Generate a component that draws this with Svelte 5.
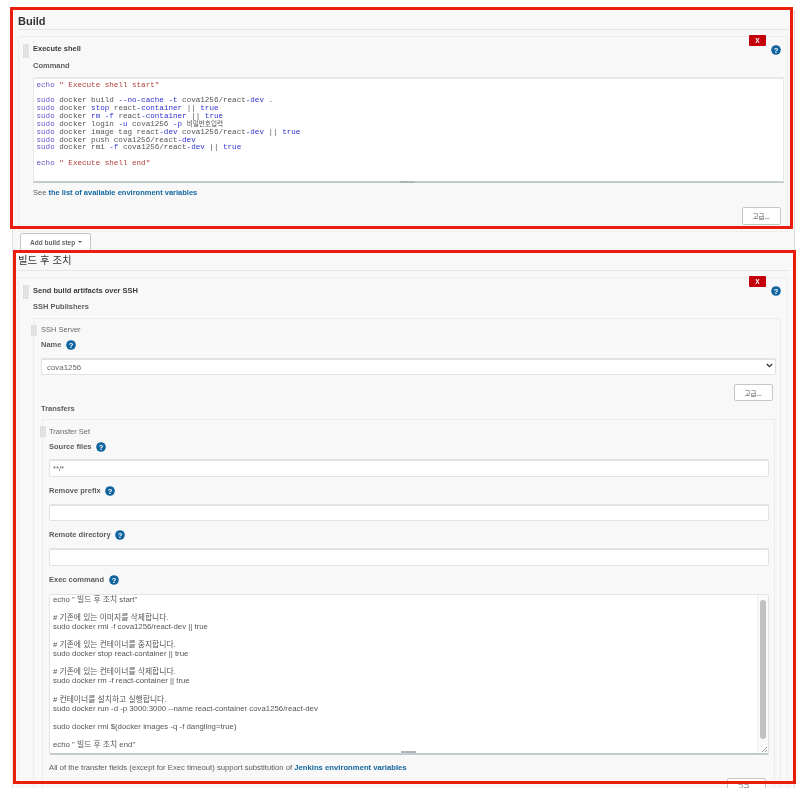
<script>
  const execLines = [
    'echo " 빌드 후 조치 start"',
    '',
    '# 기존에 있는 이미지를 삭제합니다.',
    'sudo docker rmi -f cova1256/react-dev || true',
    '',
    '# 기존에 있는 컨테이너를 중지합니다.',
    'sudo docker stop react-container || true',
    '',
    '# 기존에 있는 컨테이너를 삭제합니다.',
    'sudo docker rm -f react-container || true',
    '',
    '# 컨테이너를 설치하고 실행합니다.',
    'sudo docker run -d -p 3000:3000 --name react-container cova1256/react-dev',
    '',
    'sudo docker rmi $(docker images -q -f dangling=true)',
    '',
    'echo " 빌드 후 조치 end"'
  ];
</script>

{#snippet help()}
  <svg class="help" width="10" height="10" viewBox="0 0 10 10" aria-hidden="true">
    <circle cx="5" cy="5" r="4.8" fill="#0f639f" />
    <text x="5" y="7.7" text-anchor="middle" font-size="7.6" font-weight="700" fill="#fff">?</text>
  </svg>
{/snippet}

<div class="frame frame-build"></div>
<div class="frame frame-post"></div>

<main>
  <h2 class="first">Build</h2>
  <section class="card build-card">
    <span class="grip"></span>
    <button class="delete">X</button>
    <span class="corner-help">{@render help()}</span>
    <div class="title">Execute shell</div>
    <div class="label command">Command</div>
    <pre class="code"><span class="kw">echo</span> <span class="str">" Execute shell start"</span>

<span class="kw">sudo</span> docker build <span class="op">--no-cache</span> <span class="op">-t</span> cova1256/react<span class="op">-dev</span> .
<span class="kw">sudo</span> docker <span class="op">stop</span> react<span class="op">-container</span> || <span class="op">true</span>
<span class="kw">sudo</span> docker <span class="op">rm</span> <span class="op">-f</span> react<span class="op">-container</span> || <span class="op">true</span>
<span class="kw">sudo</span> docker login <span class="op">-u</span> cova1256 <span class="op">-p</span> <span class="ko">비밀번호입력</span>
<span class="kw">sudo</span> docker image tag react<span class="op">-dev</span> cova1256/react<span class="op">-dev</span> || <span class="op">true</span>
<span class="kw">sudo</span> docker push cova1256/react<span class="op">-dev</span>
<span class="kw">sudo</span> docker rmi <span class="op">-f</span> cova1256/react<span class="op">-dev</span> || <span class="op">true</span>

<span class="kw">echo</span> <span class="str">" Execute shell end"</span><span class="bar-grip"></span></pre>
    <p class="note see">See <a href="#vars">the list of available environment variables</a></p>
    <div class="actions first-actions"><button class="adv">고급...</button></div>
  </section>

  <button class="add-step">Add build step <i class="caret"></i></button>

  <h2 class="post">빌드 후 조치</h2>
  <section class="card post-card">
    <span class="grip"></span>
    <button class="delete">X</button>
    <span class="corner-help">{@render help()}</span>
    <div class="title">Send build artifacts over SSH</div>
    <div class="label publishers">SSH Publishers</div>

    <div class="box server-box">
      <span class="grip small"></span>
      <div class="plain">SSH Server</div>
      <div class="label with-help name">Name {@render help()}</div>
      <div class="select-wrap">
        <select class="field select-field">
          <option>cova1256</option>
        </select>
        <svg class="chevron" width="7" height="5" viewBox="0 0 7 5" aria-hidden="true">
          <path d="M0.8 1 L3.5 3.6 L6.2 1" fill="none" stroke="#333" stroke-width="1.3" />
        </svg>
      </div>
      <div class="actions server-actions"><button class="adv short">고급...</button></div>
      <div class="label transfers">Transfers</div>

      <div class="box transfer-box">
        <span class="grip small"></span>
        <div class="plain">Transfer Set</div>
        <div class="label with-help source">Source files {@render help()}</div>
        <input class="field" value="**/*" readonly />
        <div class="label with-help next">Remove prefix {@render help()}</div>
        <input class="field" readonly />
        <div class="label with-help next">Remote directory {@render help()}</div>
        <input class="field" readonly />
        <div class="label with-help next">Exec command {@render help()}</div>
        <div class="exec">
          <div class="exec-text">
            {#each execLines as line}
              <div class="exec-line">{line}</div>
            {/each}
          </div>
          <div class="scroll"><span class="thumb"></span></div>
          <span class="resize"></span>
          <span class="bar-grip exec-grip"></span>
        </div>
        <p class="note transfer-note">All of the transfer fields (except for Exec timeout) support substitution of <a href="#vars">Jenkins environment variables</a></p>
        <div class="actions last-actions"><button class="adv">고급...</button></div>
      </div>
    </div>
  </section>
</main>

<style>
  :global(body) {
    background: #fff;
    font-family: "Liberation Sans", "Noto Sans CJK KR", sans-serif;
  }

  main {
    box-sizing: border-box;
    width: 783px;
    height: 778px;
    margin: 10px 0 0 12px;
    overflow: hidden;
    background: #f8f8f8;
    border-left: 1px solid #e2e2e2;
    border-right: 1px solid #dcdcdc;
    color: #4a4a4a;
    font-size: 7.5px;
    filter: blur(0.45px);
  }

  .frame {
    position: absolute;
    z-index: 2;
    box-sizing: border-box;
    border: 3px solid #ea1d0c;
    pointer-events: none;
  }
  .frame-build { left: 10px; top: 7px; width: 783px; height: 222px; }
  .frame-post { left: 13px; top: 250px; width: 783px; height: 534px; }

  h2 {
    box-sizing: border-box;
    margin: 0 5px;
    border-bottom: 1px solid #e4e4e4;
    color: #333;
  }
  .first {
    height: 20px;
    padding-top: 5px;
    font-size: 11px;
    line-height: 12px;
  }
  .post {
    height: 19px;
    margin-top: 1px;
    padding-top: 2px;
    font-size: 10.4px;
    font-weight: 400;
    line-height: 14px;
  }

  .card {
    position: relative;
    box-sizing: border-box;
    width: 770px;
    margin: 6px 0 0 5px;
    padding: 5px 6px 0 14px;
    border: 1px solid #eee;
    background: #f8f8f8;
  }
  .build-card { height: 196px; }
  .post-card { height: 520px; padding-top: 6px; }

  .grip {
    position: absolute;
    left: 4px;
    top: 7px;
    width: 6px;
    height: 14px;
    background-color: #efefef;
    background-image: linear-gradient(#ddd 1px, transparent 1px), linear-gradient(90deg, #ddd 1px, transparent 1px);
    background-size: 2px 2px;
  }
  .grip.small {
    left: -3px;
    top: 6px;
    height: 11px;
  }

  .delete {
    position: absolute;
    right: 21px;
    top: -2px;
    width: 17px;
    height: 11px;
    padding: 0;
    border: 0;
    border-radius: 1px;
    background: #c4000a;
    color: #fff;
    font: 700 6.5px "Liberation Sans", sans-serif;
  }
  .corner-help {
    position: absolute;
    right: 6px;
    top: 8px;
    display: flex;
  }

  .title {
    height: 14px;
    color: #3c3c3c;
    font-weight: 700;
    line-height: 14px;
  }
  .label, .plain {
    height: 12px;
    font-weight: 700;
    line-height: 12px;
    color: #5c5c5c;
  }
  .plain { font-weight: 400; color: #6a6a6a; margin-top: 5px; }
  .transfer-box .plain { margin-top: 6px; }
  .with-help {
    display: flex;
    align-items: center;
    gap: 4.5px;
  }
  .command { margin-top: 4px; }
  .publishers { margin-top: 3px; }
  .name { margin-top: 3px; }
  .source { margin-top: 3px; }
  .next { margin-top: 8px; }
  .transfers { margin-top: 2px; }

  .code {
    position: relative;
    box-sizing: border-box;
    height: 106px;
    margin: 5px -3px 0 0;
    padding: 3px 3px 0 2.5px;
    border: 1px solid #e8e8e8;
    border-top-width: 2px;
    border-bottom: 2px solid #c3cbcf;
    background: #fff;
    color: #555;
    font: 7.58px/7.65px "Liberation Mono", "Noto Sans CJK KR", monospace;
  }
  .kw { color: #6650c4; }
  .op { color: #2f2fd0; }
  .str { color: #b23a3a; }
  .ko { font: 6.6px/7.65px "Noto Sans CJK KR", sans-serif; }

  .bar-grip {
    position: absolute;
    left: 366px;
    bottom: -2px;
    width: 15px;
    height: 2px;
    background: #aeb5b9;
  }
  .exec-grip { left: 351px; bottom: 0; }

  .note {
    height: 12px;
    margin: 4px 0 0;
    line-height: 12px;
    font-weight: 400;
    color: #5c5c5c;
    white-space: nowrap;
  }
  .transfer-note { font-size: 7.7px; margin-top: 7px; }
  a {
    color: #15679f;
    font-weight: 700;
    text-decoration: none;
  }

  .actions {
    display: flex;
    justify-content: flex-end;
  }
  .first-actions { margin-top: 8px; }
  .server-actions { margin-top: 9px; padding-right: 2px; }
  .last-actions { margin-top: 4px; padding-right: 3px; }
  .adv {
    box-sizing: border-box;
    width: 39.5px;
    height: 18px;
    padding: 0;
    border: 1px solid #c6c6c6;
    border-radius: 2px;
    background: #fff;
    color: #555;
    font: 6.5px "Noto Sans CJK KR", sans-serif;
  }
  .adv.short { height: 17px; }

  .add-step {
    display: flex;
    align-items: center;
    gap: 3px;
    box-sizing: border-box;
    width: 71px;
    height: 18px;
    margin: 1px 0 0 7px;
    padding: 0 0 0 9px;
    border: 1px solid #c6c6c6;
    border-radius: 2px;
    background: #fff;
    color: #666;
    font: 700 6.5px "Liberation Sans", sans-serif;
  }
  .caret {
    border: 2px solid transparent;
    border-top: 2.5px solid #555;
    border-bottom: 0;
  }

  .box {
    position: relative;
    box-sizing: border-box;
    border: 1px solid #ececec;
    border-bottom: 0;
  }
  .server-box {
    width: 748px;
    height: 470px;
    margin-top: 5px;
    padding: 0 5px 0 7px;
  }
  .transfer-box {
    width: 733px;
    margin: 4px 0 0 1px;
    padding: 0 5px 0 6px;
    height: 370px;
  }

  .field {
    display: block;
    box-sizing: border-box;
    width: 100%;
    height: 17.5px;
    margin: 7px 0 0;
    padding: 0 3px;
    border: 1px solid #e2e2e2;
    border-top-width: 2px;
    border-radius: 2px;
    outline: 0;
    background: #fff;
    color: #666;
    font: 7.7px "Liberation Sans", sans-serif;
  }
  .source + .field { margin-top: 6px; }

  .select-wrap {
    position: relative;
    width: 735px;
  }
  .select-field {
    height: 17px;
    padding: 0 5px;
    appearance: none;
    font-size: 7.9px;
  }
  .chevron {
    position: absolute;
    right: 3px;
    top: 5px;
  }

  .exec {
    position: relative;
    box-sizing: border-box;
    height: 161px;
    margin-top: 8px;
    overflow: hidden;
    border: 1px solid #e4e4e4;
    border-bottom: 2px solid #c3cbcf;
    border-radius: 2px;
    background: #fff;
  }
  .exec-text {
    padding: 0 0 0 3px;
    color: #555;
    font-size: 7.8px;
  }
  .exec-line {
    height: 9.1px;
    line-height: 9.1px;
    white-space: pre;
  }
  .scroll {
    position: absolute;
    right: 0;
    top: 0;
    bottom: 0;
    width: 10px;
    border-left: 1px solid #eee;
    background: #fafafa;
  }
  .thumb {
    position: absolute;
    left: 2px;
    top: 5px;
    width: 6px;
    height: 139px;
    border-radius: 3px;
    background: #c1c1c1;
  }
  .resize {
    position: absolute;
    right: 1px;
    bottom: 1px;
    width: 7px;
    height: 7px;
    background: linear-gradient(135deg, transparent 60%, #999 60%, #999 68%, transparent 68%, transparent 82%, #999 82%, #999 90%, transparent 90%);
  }
  .see { margin-top: 4px; }
</style>
